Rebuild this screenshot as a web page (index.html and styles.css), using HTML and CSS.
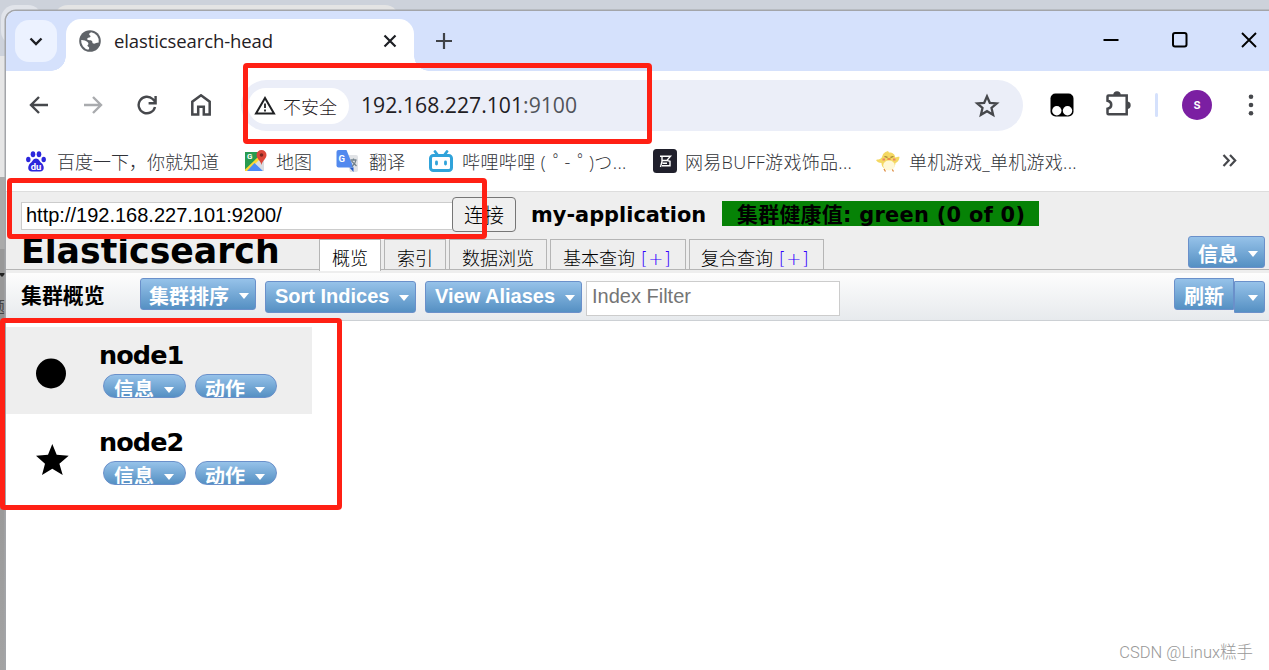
FILE: index.html
```html
<!DOCTYPE html>
<html lang="zh-CN">

<head>
  <meta charset="UTF-8" />
  <meta name="viewport" content="width=device-width, initial-scale=1.0" />
  <link rel="stylesheet" href="styles.css">
  <title>elasticsearch-head</title>
</head>

<body>
  <div class="back-window">
    <div class="back-button"></div>
    <div class="back-tab"></div>
    <div class="back-arrow"></div>
    <div class="back-text">题</div>
  </div>

  <div class="window">
    <div class="tab-strip">
      <div class="tab-search">
        <svg width="14" height="9" viewBox="0 0 14 9"><path d="M1.500 1.500 7 7l5.500-5.500" fill="none" stroke="#1d1f24" stroke-width="2.400" /></svg>
      </div>
      <div class="tab">
        <svg class="globe" width="22" height="22" viewBox="0 0 22 22">
          <circle cx="11" cy="11" r="10.800" fill="#5f6368" />
          <path d="M12.300 2.200C10 3 9.500 4.500 11 5.500c1 .8.5 1.800-.8 2-1.700.3-2.700 1.300-1.700 2.300 1.200.8 3.500-.3 4.500 1.200.7 1.200 0 2.300 1.500 2.600 1.700.3 2.700-1 5.200-1.100A9 9 0 0 0 12.300 2.200zM2.200 10c2-.2 4.900.7 6.300 1.900 1.500 1.300 1 2.600-.2 3.600.3 1.200 1.900 1.300 1.900 2.600 0 .8-.5 1.200-.9 1.600A9 9 0 0 1 2.200 10z" fill="#fff" />
        </svg>
        <span class="tab-title">elasticsearch-head</span>
        <svg class="tab-close" width="14" height="14" viewBox="0 0 14 14"><path d="M1.500 1.500l11 11M12.500 1.500l-11 11" stroke="#1d1f24" stroke-width="2.200" /></svg>
      </div>
      <svg class="new-tab" width="16" height="16" viewBox="0 0 16 16"><path d="M8 0v16M0 8h16" stroke="#3f4247" stroke-width="2.200" /></svg>
      <div class="window-buttons">
        <svg width="16" height="16" viewBox="0 0 16 16"><path d="M.5 8h15" stroke="#000" stroke-width="2" /></svg>
        <svg width="16" height="16" viewBox="0 0 16 16"><rect x="1" y="1" width="13.500" height="13.500" rx="2" fill="none" stroke="#000" stroke-width="2" /></svg>
        <svg width="16" height="16" viewBox="0 0 16 16"><path d="M1 1l14 14M15 1L1 15" stroke="#000" stroke-width="1.900" /></svg>
      </div>
    </div>

    <div class="toolbar">
      <div class="nav">
        <svg width="20" height="20" viewBox="0 0 20 20"><path d="M19 10H2.500M10 2L2 10l8 8" fill="none" stroke="#46484c" stroke-width="2.400" /></svg>
        <svg width="20" height="20" viewBox="0 0 20 20"><path d="M1 10h16.500M10 2l8 8-8 8" fill="none" stroke="#a9abae" stroke-width="2.400" /></svg>
        <svg width="20" height="20" viewBox="0 0 20 20"><path d="M18 12a8.300 8.300 0 1 1-2.300-8l2.500 2.800M18.600 1v7.200h-7" fill="none" stroke="#46484c" stroke-width="2.400" /></svg>
        <svg width="20" height="22" viewBox="0 0 20 22"><path d="M1.300 20.500V7.700L10 1.300l8.700 6.400v12.800h-5.900v-7.800H7.200v7.800z" fill="none" stroke="#46484c" stroke-width="2.500" /></svg>
      </div>
      <div class="omnibox">
        <div class="chip">
          <svg width="22" height="19" viewBox="0 0 22 19"><path d="M11 2L2 17.500h18z" fill="none" stroke="#1f2023" stroke-width="2" /><path d="M11 7.500v4.500M11 13.500v2" stroke="#1f2023" stroke-width="1.800" /></svg>
          <span>不安全</span>
        </div>
        <div class="url">192.168.227.101<span>:9100</span></div>
        <svg class="star" width="26" height="25" viewBox="0 0 26 25"><path d="M13 3.400l2.800 6.400 7 .6-5.300 4.600 1.600 6.800-6.100-3.600-6.100 3.600 1.600-6.800-5.300-4.600 7-.6z" fill="none" stroke="#46484c" stroke-width="2.300" /></svg>
      </div>
      <div class="extensions">
        <svg width="24" height="24" viewBox="0 0 24 24"><rect x=".5" y=".5" width="23" height="23" rx="5" /><circle cx="6.800" cy="17.700" r="4.700" fill="#fff" /><circle cx="17.500" cy="17.700" r="4.700" fill="#fff" /></svg>
        <svg class="puzzle" width="27" height="26" viewBox="0 0 27 26"><path d="M3.500 4.500h18.200v18.700H3.500q-1 0-1-1v-4.500c5-.8 5-7.200 0-8V5.500q0-1 1-1z" fill="none" stroke="#46484c" stroke-width="2.500" /><path d="M8.300 4a3.700 3.700 0 0 1 7.400 0zM22 10.500a3.700 3.700 0 0 1 0 7.400z" fill="#46484c" /></svg>
        <div class="divider"></div>
        <div class="avatar">s</div>
        <svg class="menu" width="6" height="22" viewBox="0 0 6 22"><circle cx="3" cy="2.700" r="2.300" fill="#46484c" /><circle cx="3" cy="11" r="2.300" fill="#46484c" /><circle cx="3" cy="19.300" r="2.300" fill="#46484c" /></svg>
      </div>
    </div>

    <div class="bookmarks">
      <a class="bookmark baidu">
        <svg width="20" height="21" viewBox="0 0 20 21">
          <g fill="#2c27dc"><ellipse cx="2.300" cy="8.500" rx="2.200" ry="2.800" /><ellipse cx="7" cy="3.200" rx="2.300" ry="3" /><ellipse cx="13" cy="3.200" rx="2.300" ry="3" /><ellipse cx="17.700" cy="8.500" rx="2.200" ry="2.800" /><path d="M10 7.500c-3 0-3.500 3-5.500 4.500C1.500 14.500 1 20.500 6 20.500h8c5 0 4.500-6 1.500-8.500-2-1.500-2.500-4.500-5.500-4.500z" /></g>
          <text class="icon-text" x="10" y="18.600" text-anchor="middle" font-size="9.500" fill="#fff">du</text>
        </svg>
        <span>百度一下，你就知道</span>
      </a>
      <a class="bookmark maps">
        <svg width="22" height="22" viewBox="0 0 22 22">
          <rect x="0" y="2" width="19" height="19" rx="1" fill="#e8eaed" />
          <path d="M0 2h15v4L1 20H0z" fill="#289b50" /><path d="M15 8l4 3v10h-1L10 13z" fill="#d9dce0" /><path d="M0 19.500L13 7l2 2L3 21H0z" fill="#fdd835" /><path d="M9.500 13L18 21H2z" fill="#4c8bf5" />
          <path d="M16.500 0a5 5 0 0 1 5 5c0 4-4 5-5 10-1-5-5-6-5-10a5 5 0 0 1 5-5z" fill="#dc4639" /><circle cx="16.500" cy="5" r="1.800" fill="#7c261f" />
          <text class="icon-text" x="2" y="9" font-size="8" fill="#fff">G</text>
        </svg>
        <span>地图</span>
      </a>
      <a class="bookmark translate">
        <svg width="24" height="23" viewBox="0 0 24 23">
          <path d="M9 5h11q2 0 2 2v13q0 2-2 2h-6z" fill="#e1e3e6" />
          <path d="M13.500 17.500h4V22z" fill="#2459c4" /><path d="M2.500 0h8l7 17.500H2.500q-2 0-2-2V2q0-2 2-2z" fill="#5289ee" />
          <path d="M14.500 10h6M17.500 8.500V10M20 10c-.5 3-2 5-4 6.500M15.500 11l5 5" fill="none" stroke="#73828c" stroke-width="1.300" />
          <text class="icon-text" x="2.500" y="12" font-size="9.500" fill="#fff">G</text>
        </svg>
        <span>翻译</span>
      </a>
      <a class="bookmark bilibili">
        <svg width="24" height="23" viewBox="0 0 24 23"><path d="M6 1.500l3 4M18 1.500l-3 4" stroke="#30a3da" stroke-width="2.800" stroke-linecap="round" /><rect x="1.500" y="5.500" width="21" height="15" rx="2.800" fill="#fff" stroke="#30a3da" stroke-width="3" /><path d="M7.500 12v2M16.500 12v2" stroke="#30a3da" stroke-width="2.800" stroke-linecap="round" /></svg>
        <span>哔哩哔哩 (<b>゜</b>-<b>゜</b>)つ...</span>
      </a>
      <a class="bookmark buff">
        <svg width="24" height="24" viewBox="0 0 24 24"><rect width="24" height="24" rx="3.500" fill="#20202c" /><path d="M7 7.300h10.500l-3.500 4 3 1v4.400H9M9.500 11.500h4.500M9 7.500v5L7.500 18M9.500 14.300h4.500" fill="none" stroke="#fff" stroke-width="1.400" /></svg>
        <span>网易BUFF游戏饰品...</span>
      </a>
      <a class="bookmark games">
        <svg width="24" height="21" viewBox="0 0 24 21"><path d="M8 18l1.500 2.500M16 18l1.500 2.500" fill="none" stroke="#dd8a3e" stroke-width="1.300" /><path d="M6 6C7 2 9 1 12 0l1 1.500c4 0 6 2 6.200 5 1.800 0 3.300-1 4.300-.5-.2 3.500-2 5-4 6-.5 9-14 9-14 0-2.500 0-4.500-1-5.500-3C2 8 4.500 9 6 6z" fill="#f4d862" /><ellipse cx="13" cy="14.500" rx="5.800" ry="5" fill="#fff8d6" /><path d="M8.500 5.500l3 .8M17.500 5.500l-3 .8" fill="none" stroke="#9c8034" stroke-width="1.200" /><ellipse cx="13" cy="8" rx="2" ry="1.100" fill="#e98a45" /><path d="M6.500 8.500h2.500M17 8.500h2.500" stroke="#ee8566" stroke-width="1.800" /></svg>
        <span>单机游戏_单机游戏...</span>
      </a>
      <svg class="overflow" width="15" height="13" viewBox="0 0 15 13"><path d="M1.500 1l5.200 5.500L1.500 12M8 1l5.200 5.500L8 12" fill="none" stroke="#46484c" stroke-width="2.200" /></svg>
    </div>

    <div class="page">
      <div class="header">
        <div class="connect-row">
          <div class="uri">http://192.168.227.101:9200/</div>
          <div class="connect">连接</div>
          <div class="cluster-name">my-application</div>
          <div class="health">集群健康值: green (0 of 0)</div>
        </div>
        <div class="nav-row">
          <h1 class="brand">Elasticsearch</h1>
          <div class="menu-tabs">
            <div class="menu-tab active overview">概览</div>
            <div class="menu-tab indices">索引</div>
            <div class="menu-tab browse">数据浏览</div>
            <div class="menu-tab basic">基本查询 <span>[+]</span></div>
            <div class="menu-tab compound">复合查询 <span>[+]</span></div>
          </div>
          <div class="button info">信息<i></i></div>
        </div>
      </div>

      <div class="subbar">
        <h2>集群概览</h2>
        <div class="button sort-cluster">集群排序<i></i></div>
        <div class="button low sort-indices">Sort Indices<i></i></div>
        <div class="button low aliases">View Aliases<i></i></div>
        <div class="filter">Index Filter</div>
        <div class="refresh-group">
          <div class="button refresh">刷新</div>
          <div class="button low split"><i></i></div>
        </div>
      </div>

      <div class="nodes">
        <div class="node shaded">
          <svg width="34" height="34" viewBox="0 0 34 34"><circle cx="15" cy="16.500" r="15" /></svg>
          <div class="node-body">
            <div class="node-name">node1</div>
            <div class="pills">
              <div class="pill">信息<i></i></div>
              <div class="pill action">动作<i></i></div>
            </div>
          </div>
        </div>
        <div class="node">
          <svg width="34" height="34" viewBox="0 0 34 34"><path d="M16.300 0l4.400 10.700 12 1-9.300 8 3.300 11.300-10.400-6.300L6 31l3-11.300-9-8 12-1z" /></svg>
          <div class="node-body">
            <div class="node-name">node2</div>
            <div class="pills">
              <div class="pill">信息<i></i></div>
              <div class="pill action">动作<i></i></div>
            </div>
          </div>
        </div>
      </div>
    </div>
  </div>

  <div class="mark mark-url"></div>
  <div class="mark mark-uri"></div>
  <div class="mark mark-nodes"></div>
  <div class="watermark">CSDN @Linux糕手</div>
</body>

</html>
```

FILE: styles.css
```css
*,
*::before,
*::after {
  box-sizing: border-box;
}

body {
  margin: 0;
  width: 1269px;
  height: 670px;
  overflow: hidden;
  position: relative;
  padding: 11px 0 0 6px;
  background: #cdd2db;
  font-family: "Open Sans", "Noto Sans CJK SC", sans-serif;
}

svg {
  display: block;
  flex: none;
}

/* window behind */
.back-window {
  position: absolute;
  inset: 0;
  overflow: hidden;
  background: linear-gradient(#cdd2db 56px, #e6e6e6 56px, #e6e6e6 177px, #aaa 177px, #aaa 249px, #989898 249px, #989898 300px, #8f8f8f 320px, #a3a3a3 100%);
}

.back-button {
  position: absolute;
  left: 1px;
  top: 5px;
  width: 41px;
  height: 40px;
  border-radius: 14px;
  background: #e1e4ea;
}

.back-tab {
  position: absolute;
  left: 54px;
  top: 5px;
  width: 345px;
  height: 40px;
  border-radius: 14px;
  background: #e4e4e4;
}

.back-arrow {
  position: absolute;
  left: -2px;
  top: 273px;
  border: 4px solid transparent;
  border-top-color: #222;
}

.back-text {
  position: absolute;
  left: -11px;
  top: 298px;
  font-size: 16px;
  line-height: 18px;
  color: #444;
}

.window {
  position: relative;
  height: 659px;
  display: flex;
  flex-direction: column;
  background: #fff;
  border-top-left-radius: 10px;
  box-shadow: 0 0 0 1.500px #a3a5a9;
}

/* tab strip */
.tab-strip {
  height: 60px;
  flex: none;
  display: flex;
  align-items: flex-start;
  border-top-left-radius: 10px;
  background: #d5e1fc;
}

.tab-search {
  width: 42px;
  height: 42px;
  margin: 9px 9px 0;
  border-radius: 14px;
  background: #ecf2ff;
  display: flex;
  align-items: center;
  justify-content: center;
}

.tab {
  position: relative;
  width: 348px;
  height: 52px;
  margin-top: 8px;
  padding: 0 17px 8px 13px;
  display: flex;
  align-items: center;
  border-radius: 15px 15px 0 0;
  background: #fff;
}

.tab::before,
.tab::after {
  content: "";
  position: absolute;
  bottom: 0;
  width: 15px;
  height: 15px;
}

.tab::before {
  left: -15px;
  background: radial-gradient(circle at 0 0, transparent 14.500px, #fff 15px);
}

.tab::after {
  right: -15px;
  background: radial-gradient(circle at 100% 0, transparent 14.500px, #fff 15px);
}

.tab-title {
  margin-left: 13px;
  padding-bottom: 2px;
  font-size: 18.500px;
  letter-spacing: -0.100px;
  color: #1f2024;
}

.tab-close {
  margin-left: auto;
}

.new-tab {
  margin: 22px 0 0 22px;
}

.window-buttons {
  display: flex;
  gap: 53px;
  margin: 21px 12px 0 auto;
}

/* address bar */
.toolbar {
  height: 69px;
  flex: none;
  display: flex;
  align-items: center;
}

.nav {
  display: flex;
  align-items: center;
  gap: 34px;
  margin-left: 23px;
  width: 212px;
  padding-bottom: 1px;
}

.omnibox {
  width: 782px;
  height: 51px;
  border-radius: 26px;
  background: #ebeef8;
  padding: 0 23px 0 7px;
  display: flex;
  align-items: center;
}

.chip {
  width: 101px;
  height: 36px;
  padding-left: 6px;
  border-radius: 18px;
  background: #fff;
  display: flex;
  align-items: center;
  gap: 7px;
  font-size: 18px;
  font-weight: 300;
  color: #1f2024;
}

.url {
  margin-left: 12px;
  padding-bottom: 3px;
  font-size: 21.200px;
  color: #1f2024;
}

.url span {
  color: #51545a;
}

.star {
  margin-left: auto;
}

.extensions {
  flex: 1;
  display: flex;
  align-items: center;
  padding: 0 0 1px 27px;
}

.puzzle {
  margin-left: 31px;
  margin-top: -2px;
}

.divider {
  width: 3px;
  height: 24px;
  margin-left: 23px;
  border-radius: 2px;
  background: #d5e1fc;
}

.avatar {
  width: 30px;
  height: 30px;
  margin-left: 24px;
  border-radius: 50%;
  background: #7b1fa2;
  color: #fff;
  font: 500 14px/29px Roboto, sans-serif;
  text-align: center;
}

.menu {
  margin-left: 36px;
}

/* bookmarks */
.bookmarks {
  position: relative;
  height: 51px;
  flex: none;
  display: flex;
  padding-left: 20px;
  font-size: 18px;
  font-weight: 300;
  color: #303237;
  white-space: nowrap;
}

.bookmark {
  height: 42px;
  display: flex;
  align-items: center;
}

.bookmark span {
  margin-left: 11px;
}

.bookmark b {
  margin: 0 -7px 0 7px;
  font-weight: 300;
}

.baidu {
  width: 219px;
}

.maps {
  width: 91px;
}

.translate {
  width: 93px;
}

.bilibili {
  width: 224px;
}

.buff {
  width: 223px;
}

.maps span,
.translate span,
.bilibili span,
.games span {
  margin-left: 9px;
}

.buff span {
  margin-left: 8px;
}

.buff span,
.games span {
  letter-spacing: 0.300px;
}

.bilibili span {
  letter-spacing: 0.400px;
}

.overflow {
  margin: 14px 32px 0 auto;
}

.icon-text {
  font-family: Roboto, sans-serif;
  font-weight: 700;
}

/* elasticsearch-head */
.page {
  flex: 1;
  font-family: "DejaVu Sans", "Noto Sans CJK SC", sans-serif;
  color: #000;
}

.header {
  height: 79px;
  border-top: 1px solid #ddd;
  border-bottom: 1px solid #b5b5b5;
  background: #eee;
}

.connect-row {
  height: 45px;
  padding: 5px 0 0 15px;
  display: flex;
  align-items: flex-start;
}

.uri {
  width: 431px;
  height: 28px;
  margin-top: 5px;
  padding-left: 4px;
  border: 1px solid #ccc;
  border-right: 0;
  background: #fff;
  font: 20px/24px "Liberation Sans", sans-serif;
}

.connect {
  width: 64px;
  height: 35px;
  border: 1px solid #767676;
  border-radius: 4px;
  background: #efefef;
  font: 300 20px/33px "Noto Sans CJK SC", sans-serif;
  text-align: center;
}

.cluster-name,
.health {
  font-size: 20.900px;
  font-weight: 700;
  line-height: 28px;
  height: 25px;
  margin-top: 4px;
  white-space: nowrap;
}

.cluster-name {
  width: 191px;
  margin-left: 15px;
}

.health {
  width: 317px;
  padding-left: 15px;
  background: #068206;
  letter-spacing: 0.300px;
}

.nav-row {
  height: 33px;
  padding: 0 4px 0 15px;
  display: flex;
  align-items: flex-start;
}

.brand {
  width: 298px;
  margin: -4px 0 0;
  font-size: 34.700px;
  line-height: 37px;
  white-space: nowrap;
}

.menu-tabs {
  display: flex;
  gap: 3px;
  margin-top: 2px;
}

.menu-tab {
  height: 31px;
  padding-left: 12px;
  border: 1px solid #b5b5b5;
  border-bottom: 0;
  font-size: 18px;
  font-weight: 300;
  line-height: 38px;
  white-space: nowrap;
  overflow: hidden;
}

.menu-tab.active {
  height: 32px;
  background: #fff;
}

.menu-tab span {
  color: #30f;
  letter-spacing: 0.400px;
}

.overview {
  width: 62px;
}

.indices {
  width: 62px;
}

.browse {
  width: 98px;
}

.basic {
  width: 136px;
}

.compound {
  width: 135px;
  padding-left: 11px;
}

.button,
.pill {
  display: flex;
  align-items: center;
  color: #fff;
  border: 1px solid #6a90ca;
  background: linear-gradient(#96c2e9, #5590c3);
  font-family: "Liberation Sans", "Noto Sans CJK SC", sans-serif;
  font-size: 20px;
  font-weight: 700;
  white-space: nowrap;
}

.button {
  height: 32px;
  padding: 2px 0 0 8px;
  border-radius: 3px;
}

.button i,
.pill i {
  width: 0;
  margin-left: auto;
  margin-right: 6px;
  margin-top: 1px;
  border: 5.500px solid transparent;
  border-top: 6.500px solid #fff;
  border-bottom: 0;
}

.info {
  width: 77px;
  margin: -1px 0 0 auto;
  padding-left: 9px;
}

.subbar {
  height: 51px;
  padding: 8px 4px 0 15px;
  border-bottom: 1px solid #ccd0d4;
  background: linear-gradient(#eee 3px, #fdfdfd 3px, #e7eaed);
  display: flex;
  align-items: flex-start;
}

.subbar h2 {
  width: 119px;
  margin: 3px 0 0;
  font-size: 20.900px;
  line-height: 30px;
}

.low {
  margin-top: 3px;
}

.sort-cluster {
  width: 116px;
}

.sort-indices {
  width: 151px;
  margin-left: 9px;
  padding: 0 0 2px 9px;
}

.aliases {
  width: 157px;
  margin-left: 9px;
  padding: 0 0 2px 9px;
}

.sort-indices i,
.aliases i {
  margin-top: 4px;
}

.filter {
  width: 254px;
  height: 35px;
  margin: 3px 0 0 4px;
  padding-left: 5px;
  border: 1px solid #ccc;
  background: #fff;
  font: 20px/29px "Liberation Sans", sans-serif;
  color: #757575;
}

.refresh-group {
  display: flex;
  margin-left: auto;
}

.refresh {
  width: 60px;
  padding-left: 9px;
  border-radius: 3px 0 0 3px;
}

.split {
  width: 31px;
  padding-top: 0;
  border-radius: 0 3px 3px 0;
}

.nodes {
  padding-top: 6px;
}

.node {
  width: 306px;
  height: 87px;
  padding: 13px 0 0 30px;
  display: flex;
}

.node > svg {
  margin-top: 17px;
}

.shaded {
  background: #eee;
}

.node-body {
  margin-left: 29px;
}

.node-name {
  font-size: 25.500px;
  font-weight: 700;
  line-height: 30px;
  letter-spacing: -0.900px;
}

.pills {
  display: flex;
  gap: 9px;
  padding: 4px 0 0 4px;
}

.pill {
  width: 83px;
  height: 24px;
  padding: 7px 5px 0 10px;
  border-radius: 12px;
  line-height: 24px;
  overflow: hidden;
}

.action {
  width: 82px;
  padding-left: 9px;
}

/* red annotations */
.mark {
  position: absolute;
  border: 5px solid #ff2014;
  border-radius: 4px;
}

.mark-url {
  left: 243px;
  top: 63px;
  width: 409px;
  height: 81px;
}

.mark-uri {
  left: 7px;
  top: 178px;
  width: 480px;
  height: 61px;
}

.mark-nodes {
  left: 0;
  top: 318px;
  width: 342px;
  height: 192px;
}

.watermark {
  position: absolute;
  right: 16px;
  bottom: 4px;
  font: 300 16.500px/26px Roboto, "Noto Sans CJK SC", sans-serif;
  color: #999;
  white-space: nowrap;
}
```
